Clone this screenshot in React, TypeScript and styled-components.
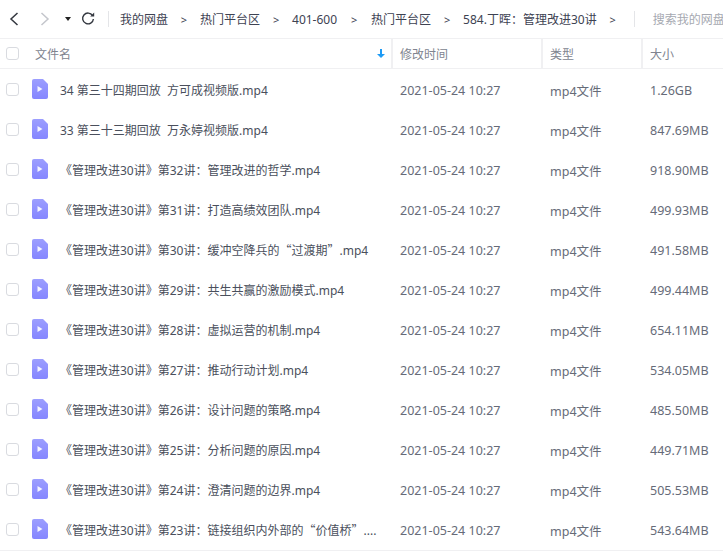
import React from "react";
import styled, { createGlobalStyle } from "styled-components";

const GlobalStyle = createGlobalStyle`
  html, body {
    margin: 0;
    padding: 0;
    background: #fff;
    overflow: hidden;
  }
  body {
    font-family: "Noto Sans", "Noto Sans CJK SC", sans-serif;
  }
`;

const Page = styled.div`
  width: 723px;
  height: 559px;
  overflow: hidden;
  background: #fff;
`;

const Toolbar = styled.div`
  display: flex;
  align-items: center;
  height: 38px;
  border-bottom: 1px solid #f0f0f2;
  white-space: nowrap;
  overflow: hidden;
`;

const NavButton = styled.button<{ $off?: boolean; $w: number }>`
  display: flex;
  align-items: center;
  justify-content: center;
  width: ${(p) => p.$w}px;
  height: 24px;
  padding: 0;
  border: 0;
  background: none;
  flex: none;
  color: ${(p) => (p.$off ? "#c4c6cc" : "#33373f")};
`;

const Caret = styled.span`
  width: 0;
  height: 0;
  margin: 0 5px 0 3px;
  border-left: 3px solid transparent;
  border-right: 3px solid transparent;
  border-top: 4px solid #222;
  flex: none;
`;

const Divider = styled.span<{ $left: number }>`
  width: 1px;
  height: 16px;
  margin-left: ${(p) => p.$left}px;
  background: #e4e5e8;
  flex: none;
`;

const Crumbs = styled.div`
  display: flex;
  align-items: center;
  margin-left: 11px;
  font-size: 12px;
  color: #3d4252;
  flex: none;
`;

const Sep = styled.span<{ $w?: number }>`
  width: ${(p) => p.$w ?? 32}px;
  text-align: center;
  flex: none;
  font-size: 11px;
`;

const Search = styled.span`
  margin-left: 18px;
  font-size: 12px;
  color: #a6a9b1;
  flex: none;
`;

const Head = styled.div`
  display: flex;
  align-items: stretch;
  height: 29px;
  border-bottom: 1px solid #f0f0f2;
  font-size: 12px;
  color: #80848f;
`;

const HeadCell = styled.div<{ $w: number }>`
  display: flex;
  align-items: center;
  box-sizing: border-box;
  width: ${(p) => p.$w}px;
  padding-left: 7px;
  flex: none;
  border-left: 2px solid #f0f0f2;
`;

const NameHead = styled.div`
  display: flex;
  align-items: center;
  width: 391px;
  flex: none;
`;

const NameLabel = styled.span`
  margin-left: 16px;
  flex: 1;
`;

const Check = styled.span`
  display: block;
  width: 11px;
  height: 11px;
  margin-left: 6px;
  border: 1px solid #d9dbe0;
  border-radius: 3px;
  flex: none;
`;

const RowCheck = styled(Check)`
  margin-bottom: 1px;
`;

const SortArrow = styled.svg`
  width: 8px;
  height: 9px;
  margin-right: 6px;
  flex: none;
`;

const List = styled.div`
  padding-top: 1px;
  border-bottom: 1px solid #f0f0f2;
`;

const Row = styled.div`
  display: flex;
  align-items: center;
  height: 40px;
  font-size: 12.5px;
  color: #666b78;
  white-space: nowrap;
`;

const NameCell = styled.div`
  display: flex;
  align-items: center;
  width: 400px;
  flex: none;
`;

const FileIcon = styled.svg`
  width: 16px;
  height: 20px;
  margin-left: 13px;
  margin-bottom: 2px;
  flex: none;
`;

const FileName = styled.span`
  margin-left: 12px;
  width: 330px;
  overflow: hidden;
  font-size: 12px;
  color: #4a4f5c;
  white-space: pre;
`;

const Quote = styled.span`
  font-family: "Noto Sans CJK SC", sans-serif;
`;

const Cell = styled.div<{ $w: number }>`
  width: ${(p) => p.$w}px;
  flex: none;
`;

const BackIcon = () => (
  <svg width="10" height="14" viewBox="0 0 10 14" fill="none" stroke="currentColor" strokeWidth="1.5">
    <path d="M8.5 1 2 7l6.5 6" />
  </svg>
);

const ForwardIcon = () => (
  <svg width="10" height="14" viewBox="0 0 10 14" fill="none" stroke="currentColor" strokeWidth="1.5">
    <path d="M1.5 1 8 7l-6.5 6" />
  </svg>
);

const ReloadIcon = () => (
  <svg width="14" height="14" viewBox="0 0 14 14" fill="none">
    <path d="M11.6 3.6A5.4 5.4 0 1 0 12.4 7" stroke="currentColor" strokeWidth="1.4" />
    <path d="M9.2 4.4h4V.6z" fill="currentColor" />
  </svg>
);

const VideoIcon = () => (
  <FileIcon viewBox="0 0 16 20">
    <defs>
      <linearGradient id="vid" x1="0" y1="0" x2="0" y2="1">
        <stop offset="0" stopColor="#9c9eff" />
        <stop offset="1" stopColor="#8586ff" />
      </linearGradient>
    </defs>
    <path d="M2 0h9l5 5v13a2 2 0 0 1-2 2H2a2 2 0 0 1-2-2V2a2 2 0 0 1 2-2z" fill="url(#vid)" />
    <path d="M5.5 7l5 3-5 3z" fill="#fff" opacity="0.9" />
  </FileIcon>
);

const files = [
  ["34 第三十四期回放  方可成视频版.mp4", "1.26GB"],
  ["33 第三十三期回放  万永婷视频版.mp4", "847.69MB"],
  ["《管理改进30讲》第32讲：管理改进的哲学.mp4", "918.90MB"],
  ["《管理改进30讲》第31讲：打造高绩效团队.mp4", "499.93MB"],
  ["《管理改进30讲》第30讲：缓冲空降兵的“过渡期”.mp4", "491.58MB"],
  ["《管理改进30讲》第29讲：共生共赢的激励模式.mp4", "499.44MB"],
  ["《管理改进30讲》第28讲：虚拟运营的机制.mp4", "654.11MB"],
  ["《管理改进30讲》第27讲：推动行动计划.mp4", "534.05MB"],
  ["《管理改进30讲》第26讲：设计问题的策略.mp4", "485.50MB"],
  ["《管理改进30讲》第25讲：分析问题的原因.mp4", "449.71MB"],
  ["《管理改进30讲》第24讲：澄清问题的边界.mp4", "505.53MB"],
  ["《管理改进30讲》第23讲：链接组织内外部的“价值桥”....", "543.64MB"],
];

// curly quotes need the CJK font or they come out half width
const withQuotes = (name: string) =>
  name.split(/([“”])/).map((part, i) => (i % 2 ? <Quote key={i}>{part}</Quote> : part));

const App = () => {
  return (
    <Page>
      <GlobalStyle />
      <Toolbar>
        <NavButton $w={28}>
          <BackIcon />
        </NavButton>
        <NavButton $w={34} $off>
          <ForwardIcon />
        </NavButton>
        <Caret />
        <NavButton $w={24}>
          <ReloadIcon />
        </NavButton>
        <Divider $left={8} />
        <Crumbs>
          我的网盘
          <Sep>&gt;</Sep>
          热门平台区
          <Sep>&gt;</Sep>
          401-600
          <Sep $w={34}>&gt;</Sep>
          热门平台区
          <Sep>&gt;</Sep>
          584.丁晖：管理改进30讲
          <Sep>&gt;</Sep>
        </Crumbs>
        <Divider $left={5} />
        <Search>搜索我的网盘</Search>
      </Toolbar>
      <Head>
        <NameHead>
          <Check />
          <NameLabel>文件名</NameLabel>
          <SortArrow viewBox="0 0 8 9">
            <path d="M3 0h2v5h3L4 9 0 5h3z" fill="#1e9bf5" />
          </SortArrow>
        </NameHead>
        <HeadCell $w={150}>修改时间</HeadCell>
        <HeadCell $w={100}>类型</HeadCell>
        <HeadCell $w={82}>大小</HeadCell>
      </Head>
      <List>
        {files.map(([name, size]) => (
          <Row key={name}>
            <NameCell>
              <RowCheck />
              <VideoIcon />
              <FileName>{withQuotes(name)}</FileName>
            </NameCell>
            <Cell $w={150}>2021-05-24 10:27</Cell>
            <Cell $w={100}>mp4文件</Cell>
            <Cell $w={73}>{size}</Cell>
          </Row>
        ))}
      </List>
    </Page>
  );
};

export default App;
